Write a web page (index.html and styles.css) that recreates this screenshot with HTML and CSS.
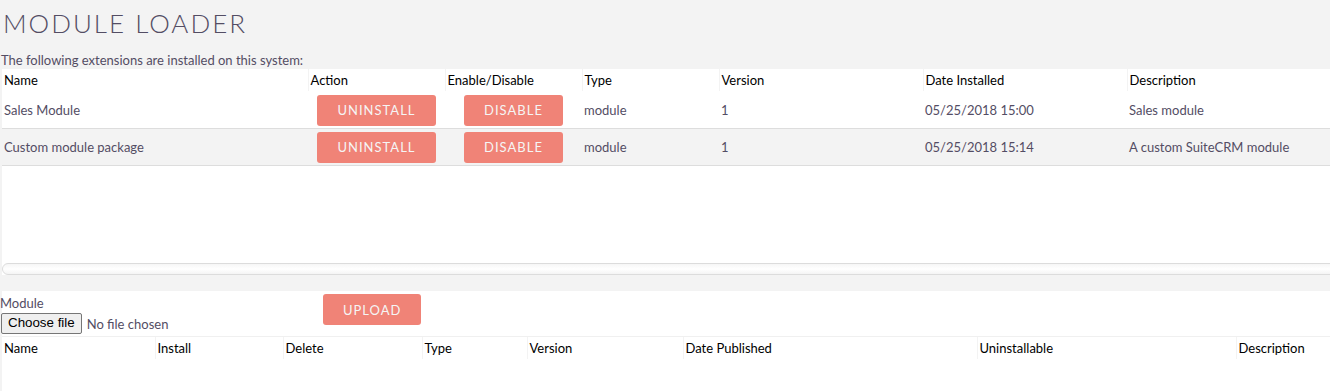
FILE: index.html
```html
<!DOCTYPE html>
<html lang="en">
<head>
  <meta charset="UTF-8" />
  <title>Module Loader</title>
  <link rel="stylesheet" href="styles.css">
</head>
<body>
  <h2 class="title">MODULE LOADER</h2>
  <p class="intro">The following extensions are installed on this system:</p>
  <div class="list-wrap">
    <table class="list installed">
      <colgroup>
        <col style="width:306px"><col style="width:137px"><col style="width:137px"><col style="width:137px"><col style="width:204px"><col style="width:204px"><col>
      </colgroup>
      <thead>
        <tr>
          <th>Name</th>
          <th>Action</th>
          <th>Enable/Disable</th>
          <th>Type</th>
          <th>Version</th>
          <th>Date Installed</th>
          <th>Description</th>
        </tr>
      </thead>
      <tbody>
        <tr>
          <td>Sales Module</td>
          <td class="center"><button class="button">Uninstall</button></td>
          <td class="center"><button class="button">Disable</button></td>
          <td>module</td>
          <td>1</td>
          <td>05/25/2018 15:00</td>
          <td>Sales module</td>
        </tr>
        <tr class="odd">
          <td>Custom module package</td>
          <td class="center"><button class="button">Uninstall</button></td>
          <td class="center"><button class="button">Disable</button></td>
          <td>module</td>
          <td>1</td>
          <td>05/25/2018 15:14</td>
          <td>A custom SuiteCRM module</td>
        </tr>
      </tbody>
    </table>
    <div class="scrollbar"></div>
  </div>

  <div class="upload">
    <div class="upload-form">
      <div class="file-field">
        <label class="field-label">Module</label>
        <div class="file-input">
          <span class="file-btn">Choose file</span>
          <span class="file-name">No file chosen</span>
        </div>
      </div>
      <button class="button upload-btn">Upload</button>
    </div>
    <table class="list packages">
      <colgroup>
        <col style="width:153px"><col style="width:128px"><col style="width:139px"><col style="width:105px"><col style="width:156px"><col style="width:294px"><col style="width:259px"><col>
      </colgroup>
      <thead>
        <tr>
          <th>Name</th>
          <th>Install</th>
          <th>Delete</th>
          <th>Type</th>
          <th>Version</th>
          <th>Date Published</th>
          <th>Uninstallable</th>
          <th>Description</th>
        </tr>
      </thead>
    </table>
  </div>
</body>
</html>
```

FILE: styles.css
```css
body {
  margin: 0;
  padding: 0;
  background-color: #f3f3f3;
  font-family: 'Lato', 'Liberation Sans', sans-serif;
  font-size: 13px;
  color: #534d64;
  height: 391px;
  overflow: hidden;
}
.title {
  margin: 0;
  padding: 9px 0 0 3px;
  font-size: 26px;
  font-weight: 300;
  letter-spacing: 2px;
  line-height: 28px;
  color: #534d64;
}
.intro {
  margin: 0;
  padding: 14px 0 0 1px;
  line-height: 18px;
}
.list-wrap {
  margin-left: 2px;
  background-color: #ffffff;
  height: 206px;
  position: relative;
  overflow: hidden;
}
.list {
  width: 100%;
  border-collapse: collapse;
  table-layout: fixed;
}
.list th {
  height: 22px;
  padding: 0 2px;
  text-align: left;
  font-weight: normal;
  color: #000000;
  border-left: 1px solid #f3f3f3;
  white-space: nowrap;
}
.list th:first-child {
  border-left: none;
}
.installed td {
  height: 36px;
  padding: 1px 2px 0;
  border-bottom: 1px solid #dddddd;
  white-space: nowrap;
  vertical-align: middle;
}
.installed tr.odd td {
  height: 36px;
  padding-top: 0;
  background-color: #f3f3f3;
}
.center {
  text-align: center;
}
.button {
  display: inline-block;
  vertical-align: middle;
  height: 31px;
  padding: 0 20px;
  background-color: #f08377;
  color: #f5f5f5;
  border: none;
  border-radius: 3px;
  font-family: 'Lato', 'Liberation Sans', sans-serif;
  font-size: 13px;
  letter-spacing: 1px;
  text-transform: uppercase;
  cursor: pointer;
}
.scrollbar {
  position: absolute;
  left: 0;
  right: -12px;
  bottom: 0;
  height: 10px;
  border: 1px solid #dcdcdc;
  border-radius: 6px;
  background: linear-gradient(#f6f6f6, #ffffff 50%, #f4f4f4);
}
.upload {
  margin-top: 16px;
  margin-left: 2px;
  background-color: #ffffff;
  height: 100px;
}
.upload-form {
  display: flex;
  align-items: flex-start;
  height: 45px;
  border-bottom: 1px solid #f0f0f0;
}
.file-field {
  width: 323px;
  margin-left: -2px;
  padding-top: 3px;
}
.field-label {
  display: block;
  line-height: 18px;
}
.file-input {
  display: flex;
  align-items: center;
  gap: 5px;
  margin-top: 1px;
  margin-left: 1px;
}
.file-btn {
  font-family: 'Liberation Sans', Arial, sans-serif;
  font-size: 13.33px;
  color: #000000;
  background-color: #efefef;
  border: 1px solid #767676;
  border-radius: 2px;
  padding: 1px 6px 2px;
  line-height: 16px;
}
.file-name {
  font-size: 13px;
}
.upload-btn {
  margin-top: 3px;
  padding: 0 20px;
}
```
